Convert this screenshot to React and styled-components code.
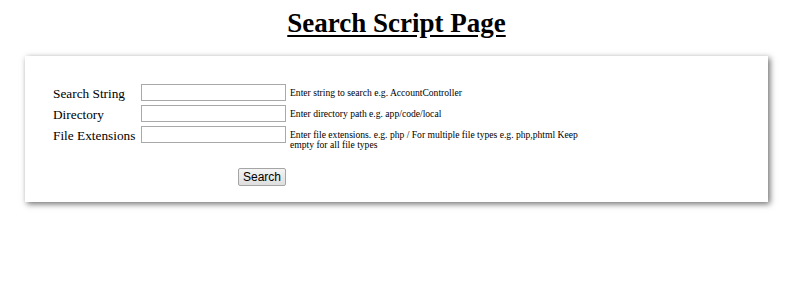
import React from "react";
import styled, { createGlobalStyle } from "styled-components";

const GlobalStyle = createGlobalStyle`
  body {
    margin: 0;
    background: #fff;
    font-family: "Liberation Serif", "Times New Roman", serif;
    color: #000;
  }
`;

const Page = styled.div`
  width: 743px;
  margin-left: 25px;
  padding: 7px 0 40px;
`;

const Title = styled.h1`
  margin: 0 0 17px;
  text-align: center;
  font-size: 27px;
  line-height: 32px;
  font-weight: bold;
  text-decoration: underline;
  text-underline-offset: 3px;
`;

const Panel = styled.div`
  background: #fff;
  box-shadow: 2px 2px 6px 0 #6e6e6e;
  padding: 28px 28px 16px;
`;

const Form = styled.div`
  display: grid;
  grid-template-columns: 88px 145px 295px;
  row-gap: 3px;
  align-items: start;
`;

const Label = styled.label`
  font-size: 13.3px;
  line-height: 17px;
  padding-top: 1px;
`;

const Field = styled.input`
  box-sizing: border-box;
  width: 145px;
  height: 17px;
  margin: 0;
  border: 1px solid #a9a9a9;
  padding: 1px 3px;
  font-size: 11px;
`;

const Hint = styled.span`
  font-size: 9.6px;
  line-height: 10px;
  padding: 4px 0 0 4px;
`;

const Actions = styled.div`
  grid-column: 2;
  display: flex;
  justify-content: flex-end;
  margin-top: 15px;
`;

const Button = styled.button`
  font-family: Arial, "Liberation Sans", sans-serif;
  font-size: 12px;
  height: 18px;
  padding: 0 4px;
  border: 1px solid #a5a5a5;
  border-radius: 2px;
  background: linear-gradient(#f4f4f4, #dedede);
  color: #000;
`;

const rows = [
  { label: "Search String", hint: "Enter string to search e.g. AccountController" },
  { label: "Directory", hint: "Enter directory path e.g. app/code/local" },
  {
    label: "File Extensions",
    hint: "Enter file extensions. e.g. php / For multiple file types e.g. php,phtml Keep empty for all file types",
  },
];

export default function App() {
  return (
    <>
      <GlobalStyle />
      <Page>
        <Title>Search Script Page</Title>
        <Panel>
          <Form>
            {rows.map((r) => (
              <React.Fragment key={r.label}>
                <Label>{r.label}</Label>
                <Field type="text" />
                <Hint>{r.hint}</Hint>
              </React.Fragment>
            ))}
            <Actions>
              <Button>Search</Button>
            </Actions>
          </Form>
        </Panel>
      </Page>
    </>
  );
}
